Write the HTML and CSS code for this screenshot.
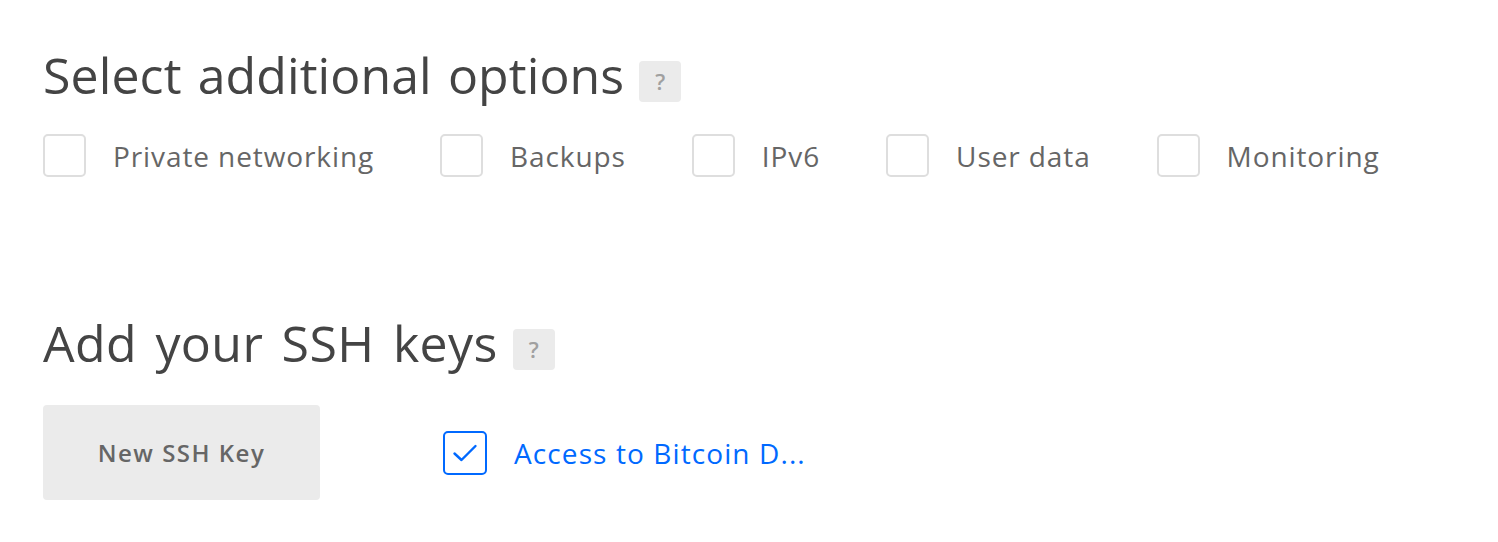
FILE: index.html
```html
<!DOCTYPE html>
<html>
<head>
<meta charset="utf-8">
<link rel="stylesheet" href="styles.css">
</head>
<body>
<div class="page">
  <section class="section options">
    <h2 class="title">Select additional options <span class="help">?</span></h2>
    <div class="option-row">
      <label class="option"><span class="box"></span><span class="label">Private networking</span></label>
      <label class="option"><span class="box"></span><span class="label">Backups</span></label>
      <label class="option"><span class="box"></span><span class="label">IPv6</span></label>
      <label class="option"><span class="box"></span><span class="label">User data</span></label>
      <label class="option"><span class="box"></span><span class="label">Monitoring</span></label>
    </div>
  </section>
  <section class="section ssh">
    <h2 class="title title-ssh">Add your SSH keys <span class="help">?</span></h2>
    <div class="ssh-row">
      <button class="btn">New SSH Key</button>
      <label class="option checked"><span class="box"><svg width="26" height="20" viewBox="0 0 26 20"><path d="M2.5 10.5 L9.5 17 L23.5 3" fill="none" stroke="#0069ff" stroke-width="2.4" stroke-linecap="round" stroke-linejoin="round"/></svg></span><span class="label">Access to Bitcoin D...</span></label>
    </div>
  </section>
</div>
</body>
</html>
```
FILE: styles.css
```css
* { box-sizing: border-box; }
body {
  margin: 0;
  background: #fff;
  font-family: "Open Sans", Lato, sans-serif;
}
.page {
  padding: 45px 0 0 43px;
}
.title {
  margin: 0;
  height: 60px;
  font-size: 50px;
  font-weight: 400;
  color: #444;
  line-height: 60px;
  letter-spacing: 0.1px;
  word-spacing: 3px;
  display: flex;
  align-items: flex-end;
  gap: 15px;
}
.title-ssh {
  letter-spacing: 0.4px;
  word-spacing: 5px;
}
.help {
  width: 42px;
  height: 41px;
  margin-bottom: 3px;
  background: #ebebeb;
  border-radius: 4px;
  color: #a0a0a0;
  font-size: 22px;
  line-height: 41px;
  font-weight: 600;
  letter-spacing: 0;
  display: inline-flex;
  align-items: center;
  justify-content: center;
}
.option-row {
  display: flex;
  margin-top: 29px;
  gap: 66px;
}
.option {
  display: flex;
  align-items: center;
  gap: 27px;
}
.box {
  width: 43px;
  height: 43px;
  border: 2px solid #dedede;
  border-radius: 5px;
  display: inline-flex;
  align-items: center;
  justify-content: center;
}
.label {
  font-size: 28px;
  line-height: 36px;
  letter-spacing: 0.9px;
  color: #666;
}
.ssh {
  margin-top: 136px;
}
.ssh-row {
  display: flex;
  align-items: center;
  margin-top: 32px;
  gap: 123px;
}
.btn {
  width: 277px;
  height: 95px;
  border: none;
  border-radius: 4px;
  background: #ebebeb;
  color: #666;
  font-family: "Open Sans", Lato, sans-serif;
  font-size: 24px;
  font-weight: 600;
  letter-spacing: 1.5px;
}
.checked .box {
  width: 44px;
  height: 44px;
  border-color: #0069ff;
}
.checked .label {
  color: #0069ff;
  letter-spacing: 1.1px;
}
```
